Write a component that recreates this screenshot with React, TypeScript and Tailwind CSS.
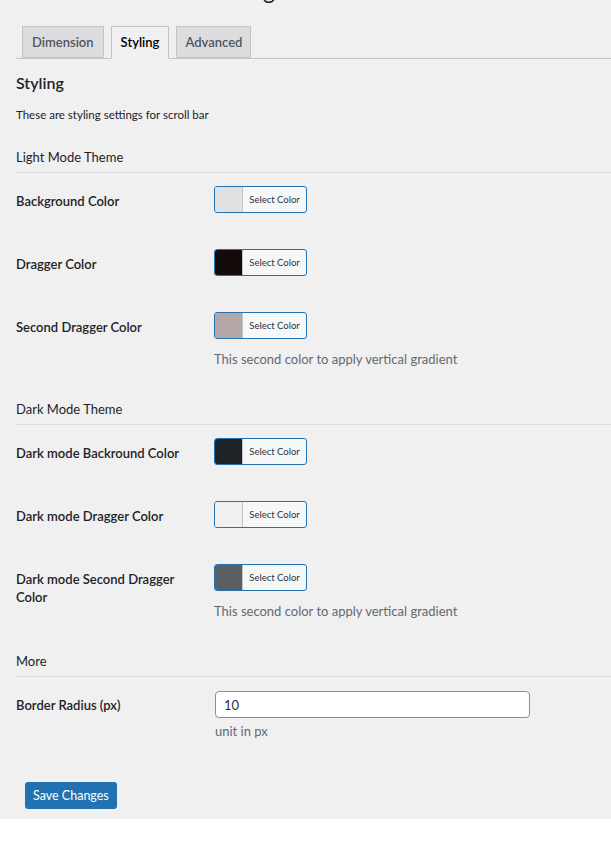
import React from 'react';

type ColorRow = {
  label: string;
  swatch: string;
  description?: string;
};

const lightRows: ColorRow[] = [
  { label: 'Background Color', swatch: 'bg-[#e0e0e0]' },
  { label: 'Dragger Color', swatch: 'bg-[#140b0b]' },
  {
    label: 'Second Dragger Color',
    swatch: 'bg-[#b3a7a5]',
    description: 'This second color to apply vertical gradient',
  },
];

const darkRows: ColorRow[] = [
  { label: 'Dark mode Backround Color', swatch: 'bg-[#1e2328]' },
  { label: 'Dark mode Dragger Color', swatch: 'bg-[#f0f0f1]' },
  {
    label: 'Dark mode Second Dragger Color',
    swatch: 'bg-[#5b5e62]',
    description: 'This second color to apply vertical gradient',
  },
];

function SectionHeading({ title, first }: { title: string; first?: boolean }) {
  return (
    <div
      className={`${first ? 'pt-[24px]' : 'pt-[9px]'} pb-[6px] border-b border-[#dcdcde]`}
    >
      <h3 className="text-[13px] leading-[18px] text-[#1d2327]">{title}</h3>
    </div>
  );
}

function ColorButton({ swatch }: { swatch: string }) {
  return (
    <button
      type="button"
      className="flex h-[27px] w-[93px] overflow-hidden rounded-[3px] border border-[#2271b1] bg-[#f6f7f7]"
    >
      <span className={`h-full w-[28px] border-r border-[#c3c4c7] ${swatch}`} />
      <span className="flex-1 text-center text-[9.5px] leading-[25px] text-[#2c3338]">
        Select Color
      </span>
    </button>
  );
}

function Row({ label, children }: { label: string; children: React.ReactNode }) {
  return (
    <div className="flex pt-[13px] pb-[23px]">
      <div className="w-[198px] shrink-0 pt-[6px] pr-[10px] text-[13px] font-semibold leading-[18px] text-[#1d2327]">
        {label}
      </div>
      <div className="flex-1">{children}</div>
    </div>
  );
}

function Description({ text, tight }: { text: string; tight?: boolean }) {
  return (
    <p className={`${tight ? 'mt-[4px]' : 'mt-[11px]'} text-[13px] leading-[18px] text-[#646970]`}>
      {text}
    </p>
  );
}

export default function App() {
  return (
    <div className="min-h-screen bg-white font-['Lato',sans-serif]">
      <div className="overflow-hidden bg-[#f0f0f1] pl-4 pb-[10px]">
        {/* Page title, mostly scrolled out of view */}
        <h1 className="-mt-[24px] ml-[11px] text-[23px] leading-[29px] text-[#1d2327]">
          Custom Scrollbar Settings
        </h1>

        {/* Tabs */}
        <nav className="mt-[21px] flex gap-[7px] border-b border-[#c3c4c7] pl-[6px]">
          <a className="-mb-px h-[32px] border border-[#c3c4c7] bg-[#dcdcde] px-[9px] text-[13px] font-semibold leading-[30px] text-[#50575e]">
            Dimension
          </a>
          <a className="-mb-px h-[33px] border border-[#c3c4c7] border-b-[#f0f0f1] bg-[#f0f0f1] px-[9px] text-[13px] font-semibold leading-[30px] text-black">
            Styling
          </a>
          <a className="-mb-px h-[32px] border border-[#c3c4c7] bg-[#dcdcde] px-[8px] text-[13px] font-semibold leading-[30px] text-[#50575e]">
            Advanced
          </a>
        </nav>

        <div>
          <h2 className="mt-[14px] text-[16px] font-semibold leading-[20px] text-[#1d2327]">
            Styling
          </h2>
          <p className="mt-[13px] text-[11.5px] leading-[18px] text-[#1d2327]">
            These are styling settings for scroll bar
          </p>

          <SectionHeading title="Light Mode Theme" first />
          {lightRows.map((row) => (
            <Row key={row.label} label={row.label}>
              <ColorButton swatch={row.swatch} />
              {row.description && <Description text={row.description} />}
            </Row>
          ))}

          <SectionHeading title="Dark Mode Theme" />
          {darkRows.map((row) => (
            <Row key={row.label} label={row.label}>
              <ColorButton swatch={row.swatch} />
              {row.description && <Description text={row.description} />}
            </Row>
          ))}

          <SectionHeading title="More" />
          <div className="flex pt-[14px]">
            <div className="w-[198px] shrink-0 pt-[5px] text-[13px] font-semibold leading-[18px] text-[#1d2327]">
              Border Radius (px)
            </div>
            <div className="flex-1 pl-px">
              <input
                type="text"
                defaultValue="10"
                className="h-[27px] w-[315px] rounded-[4px] border border-[#8c8f94] bg-white px-[8px] text-[13px] text-[#2c3338] outline-none"
              />
              <Description text="unit in px" tight />
            </div>
          </div>

          <div className="mt-[42px] pl-[9px]">
            <button
              type="button"
              className="h-[27px] rounded-[3px] bg-[#2271b1] px-[8px] text-[12.5px] leading-[27px] text-white"
            >
              Save Changes
            </button>
          </div>
        </div>
      </div>
    </div>
  );
}
